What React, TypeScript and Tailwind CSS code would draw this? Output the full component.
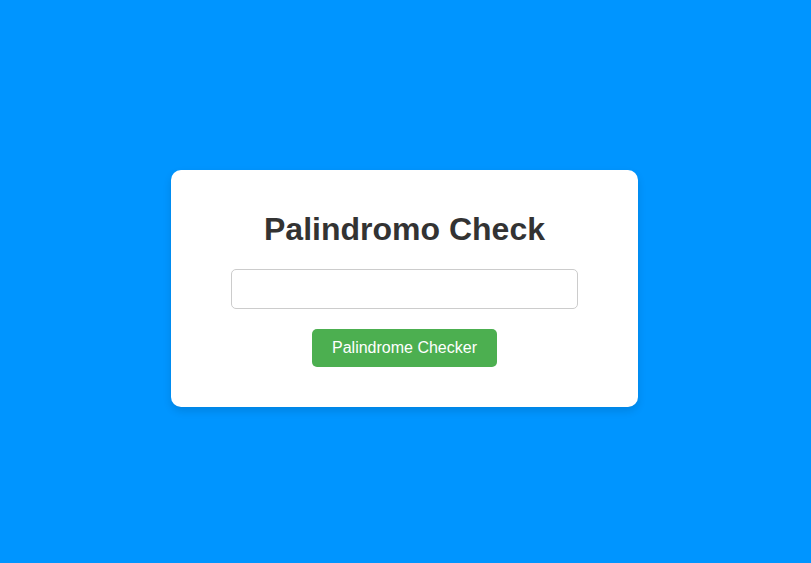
export default function App() {
  return (
    <div className="flex h-[563px] items-center justify-center bg-[#0095ff] pt-[14px] pr-[2px] font-['Liberation_Sans',Arial,sans-serif]">
      <div className="flex w-[467px] flex-col items-center rounded-[10px] bg-white p-5 shadow-[0_4px_8px_rgba(0,0,0,0.12)]">
        <h1 className="my-[21.44px] text-[32px] leading-[36.8px] font-bold text-[#333]">Palindromo Check</h1>
        <input
          type="text"
          className="h-[40px] w-[347px] rounded-[5px] border border-[#ccc] px-2.5 text-base outline-none"
        />
        <button
          type="button"
          className="my-5 h-[38px] w-[185px] rounded-[5px] bg-[#4caf50] text-base text-white"
        >
          Palindrome Checker
        </button>
      </div>
    </div>
  );
}
